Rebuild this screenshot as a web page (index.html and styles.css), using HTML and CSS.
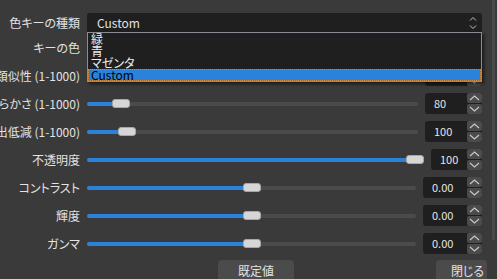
FILE: index.html
```html
<!DOCTYPE html>
<html lang="ja">
<head>
    <meta charset="UTF-8">
    <meta name="viewport" content="width=device-width, initial-scale=1.0">
    <title>色キー</title>
    <link rel="stylesheet" href="styles.css">
</head>
<body>

    <div class="dialog">
        <div class="content">
            <div class="form">

                <div class="row row-first">
                    <div class="label"><span>色キーの種類</span></div>
                    <div class="combo">
                        <span class="combo-text">Custom</span>
                        <svg class="combo-arrows" width="8" height="14" viewBox="0 0 8 14">
                            <polyline points="1,4.5 4,1.5 7,4.5" />
                            <polyline points="1,9.5 4,12.5 7,9.5" />
                        </svg>
                        <ul class="combo-list">
                            <li>緑</li>
                            <li>青</li>
                            <li>マゼンタ</li>
                            <li class="selected">Custom</li>
                        </ul>
                    </div>
                </div>

                <div class="row">
                    <div class="label"><span>キーの色</span></div>
                    <div class="color-pick"></div>
                </div>

                <div class="row">
                    <div class="label"><span>類似性 (1-1000)</span></div>
                    <div class="control">
                        <div class="slider" style="--v: 0.4"><div class="fill"></div><div class="handle"></div></div>
                        <div class="spin spin-57">
                            <div class="spin-value">400</div>
                            <div class="spin-btns">
                                <div class="spin-btn"><svg width="11" height="6" viewBox="0 0 11 6"><polyline points="1,5 5.5,1 10,5" /></svg></div>
                                <div class="spin-btn"><svg width="11" height="6" viewBox="0 0 11 6"><polyline points="1,1 5.5,5 10,1" /></svg></div>
                            </div>
                        </div>
                    </div>
                </div>

                <div class="row">
                    <div class="label"><span>滑らかさ (1-1000)</span></div>
                    <div class="control">
                        <div class="slider" style="--v: 0.08"><div class="fill"></div><div class="handle"></div></div>
                        <div class="spin spin-57">
                            <div class="spin-value">80</div>
                            <div class="spin-btns">
                                <div class="spin-btn"><svg width="11" height="6" viewBox="0 0 11 6"><polyline points="1,5 5.5,1 10,5" /></svg></div>
                                <div class="spin-btn"><svg width="11" height="6" viewBox="0 0 11 6"><polyline points="1,1 5.5,5 10,1" /></svg></div>
                            </div>
                        </div>
                    </div>
                </div>

                <div class="row">
                    <div class="label"><span>出低減 (1-1000)</span></div>
                    <div class="control">
                        <div class="slider" style="--v: 0.1"><div class="fill"></div><div class="handle"></div></div>
                        <div class="spin spin-57">
                            <div class="spin-value">100</div>
                            <div class="spin-btns">
                                <div class="spin-btn"><svg width="11" height="6" viewBox="0 0 11 6"><polyline points="1,5 5.5,1 10,5" /></svg></div>
                                <div class="spin-btn"><svg width="11" height="6" viewBox="0 0 11 6"><polyline points="1,1 5.5,5 10,1" /></svg></div>
                            </div>
                        </div>
                    </div>
                </div>

                <div class="row">
                    <div class="label"><span>不透明度</span></div>
                    <div class="control">
                        <div class="slider" style="--v: 1"><div class="fill"></div><div class="handle"></div></div>
                        <div class="spin spin-51">
                            <div class="spin-value">100</div>
                            <div class="spin-btns">
                                <div class="spin-btn"><svg width="11" height="6" viewBox="0 0 11 6"><polyline points="1,5 5.5,1 10,5" /></svg></div>
                                <div class="spin-btn"><svg width="11" height="6" viewBox="0 0 11 6"><polyline points="1,1 5.5,5 10,1" /></svg></div>
                            </div>
                        </div>
                    </div>
                </div>

                <div class="row">
                    <div class="label"><span>コントラスト</span></div>
                    <div class="control">
                        <div class="slider" style="--v: 0.5"><div class="fill"></div><div class="handle"></div></div>
                        <div class="spin spin-59">
                            <div class="spin-value">0.00</div>
                            <div class="spin-btns">
                                <div class="spin-btn"><svg width="11" height="6" viewBox="0 0 11 6"><polyline points="1,5 5.5,1 10,5" /></svg></div>
                                <div class="spin-btn"><svg width="11" height="6" viewBox="0 0 11 6"><polyline points="1,1 5.5,5 10,1" /></svg></div>
                            </div>
                        </div>
                    </div>
                </div>

                <div class="row">
                    <div class="label"><span>輝度</span></div>
                    <div class="control">
                        <div class="slider" style="--v: 0.5"><div class="fill"></div><div class="handle"></div></div>
                        <div class="spin spin-59">
                            <div class="spin-value">0.00</div>
                            <div class="spin-btns">
                                <div class="spin-btn"><svg width="11" height="6" viewBox="0 0 11 6"><polyline points="1,5 5.5,1 10,5" /></svg></div>
                                <div class="spin-btn"><svg width="11" height="6" viewBox="0 0 11 6"><polyline points="1,1 5.5,5 10,1" /></svg></div>
                            </div>
                        </div>
                    </div>
                </div>

                <div class="row">
                    <div class="label"><span>ガンマ</span></div>
                    <div class="control">
                        <div class="slider" style="--v: 0.5"><div class="fill"></div><div class="handle"></div></div>
                        <div class="spin spin-59">
                            <div class="spin-value">0.00</div>
                            <div class="spin-btns">
                                <div class="spin-btn"><svg width="11" height="6" viewBox="0 0 11 6"><polyline points="1,5 5.5,1 10,5" /></svg></div>
                                <div class="spin-btn"><svg width="11" height="6" viewBox="0 0 11 6"><polyline points="1,1 5.5,5 10,1" /></svg></div>
                            </div>
                        </div>
                    </div>
                </div>

            </div>

            <div class="buttons">
                <button class="btn btn-default">既定値</button>
                <button class="btn btn-close">閉じる</button>
            </div>
        </div>

        <div class="scrollbar"><div class="thumb"></div></div>
    </div>

</body>
</html>
```

FILE: styles.css
```css
body {
    margin: 0;
    padding: 0;
    background-color: #3a3a3a;
    color: #e2e2e2;
    font-family: "Noto Sans CJK JP", "Noto Sans", sans-serif;
    font-size: 12px;
    font-feature-settings: "palt";
    overflow: hidden;
}

.dialog {
    display: flex;
    width: 497px;
    height: 279px;
    overflow: hidden;
}

.content {
    width: 492px;
}

.form {
    width: 482px;
    padding-top: 13px;
    display: flex;
    flex-direction: column;
    gap: 7px;
}

.row {
    display: grid;
    grid-template-columns: 80px 1fr;
    column-gap: 7px;
    height: 21px;
}

.row-first {
    height: 19px;
    margin-bottom: -2px;
    position: relative;
    z-index: 2;
}

.label {
    min-width: 0;
    display: flex;
    justify-content: flex-end;
    align-items: center;
    white-space: nowrap;
    line-height: 1;
}

/* combo box with open popup */
.combo {
    position: relative;
    background-color: #1f1f1f;
    border-radius: 3px 3px 0 0;
    display: flex;
    align-items: center;
    padding-left: 10px;
}

.combo-text {
    flex: 1;
    line-height: 1;
}

.combo-arrows {
    margin-right: 5px;
}

.combo-arrows polyline {
    fill: none;
    stroke: #c4c4c4;
    stroke-width: 1;
}

.combo-list {
    position: absolute;
    top: 100%;
    left: 0;
    right: 0;
    margin: 0;
    padding: 0;
    list-style: none;
    background-color: #1f1f1f;
    border: 1px solid #8c8d94;
    box-shadow: 2px 2px 3px rgba(0, 0, 0, 0.55);
}

.combo-list li {
    height: 12px;
    line-height: 12px;
    padding-left: 3px;
    color: #ececec;
}

.combo-list li.selected {
    background-color: #2a82da;
    color: #000000;
    outline: 1px dotted #d0893c;
    outline-offset: -1px;
}

.color-pick {
    background-color: #1f1f1f;
    border-radius: 3px;
}

/* slider + spin box */
.control {
    display: flex;
    gap: 7px;
    align-items: center;
}

.slider {
    flex: 1;
    position: relative;
    height: 21px;
}

.slider::before {
    content: "";
    position: absolute;
    left: 0;
    right: 0;
    top: 9px;
    height: 4px;
    border-radius: 2px;
    background-color: #4b4b4b;
}

.fill {
    position: absolute;
    left: 0;
    top: 9px;
    height: 4px;
    border-radius: 2px;
    background-color: #2a82da;
    width: calc(var(--v) * (100% - 18px) + 2px);
}

.handle {
    position: absolute;
    top: 6px;
    left: calc(var(--v) * (100% - 18px));
    width: 18px;
    height: 9px;
    box-sizing: border-box;
    border-radius: 3px;
    background-color: #d6d6d6;
    border: 1px solid #a8a8a8;
}

.spin {
    display: flex;
    height: 21px;
}

.spin-57 {
    width: 57px;
}

.spin-51 {
    width: 51px;
}

.spin-59 {
    width: 59px;
}

.spin-value {
    flex: 1;
    background-color: #1f1f1f;
    border-radius: 3px 0 0 3px;
    padding-left: 9px;
    font-size: 11px;
    line-height: 21px;
    color: #e6e6e6;
}

.spin-btns {
    width: 15px;
    display: flex;
    flex-direction: column;
    gap: 1px;
    background-color: #1f1f1f;
}

.spin-btn {
    flex: 1;
    background-color: #4b4b4b;
    border-radius: 2px;
    display: flex;
    align-items: center;
    justify-content: center;
}

.spin-btn polyline {
    fill: none;
    stroke: #c8c8c8;
    stroke-width: 1.2;
}

/* bottom buttons */
.buttons {
    display: flex;
    margin-top: 6px;
    padding-left: 218px;
    width: 269px;
}

.btn {
    font-family: "Noto Sans CJK JP", "Noto Sans", sans-serif;
    font-size: 12px;
    font-feature-settings: "palt";
    color: #e2e2e2;
    background-color: #4b4b4b;
    border: none;
    border-radius: 4px;
    height: 25px;
    padding: 0 0 4px 0;
}

.btn-default {
    width: 76px;
}

.btn-close {
    width: 51px;
    margin-left: auto;
    padding-left: 12px;
}

.scrollbar {
    width: 5px;
    padding-left: 1px;
}

.thumb {
    width: 3px;
    height: 240px;
    background-color: #4a4a4a;
    border-radius: 0 0 2px 2px;
}
```
